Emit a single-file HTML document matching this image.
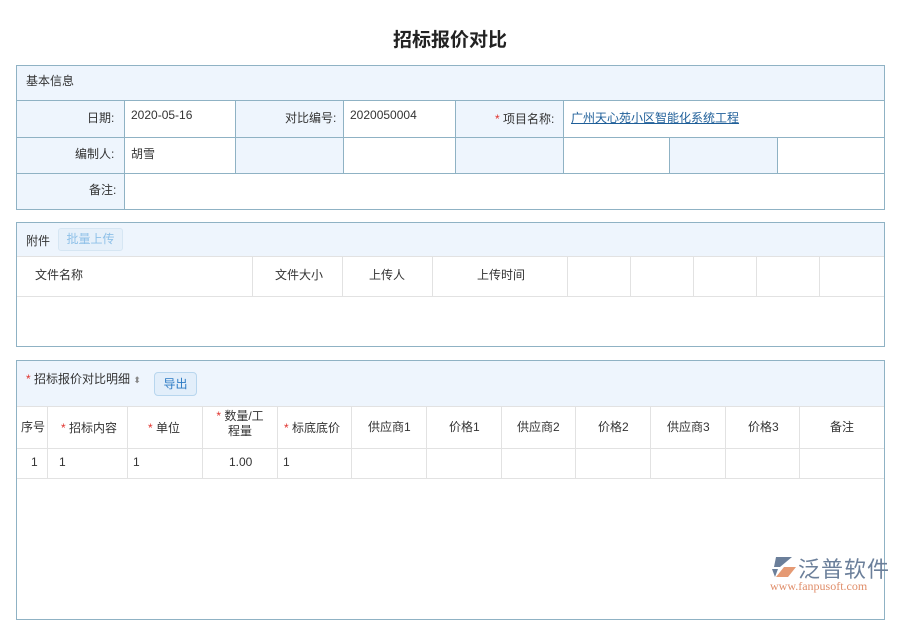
<!DOCTYPE html>
<html><head><meta charset="utf-8"><style>
*{box-sizing:border-box;margin:0;padding:0}
body{width:900px;height:600px;overflow:hidden;background:#fff;font-family:"Liberation Sans","Noto Sans CJK SC",sans-serif;font-size:12px;color:#333;position:relative}
.a{position:absolute}
.t{left:0;width:900px;top:25px;text-align:center;font-size:19px;font-weight:bold;color:#222}
.box{border:1px solid #8fb2c4;left:16px;width:869px}
.hd{background:#eef5fd;left:0;width:867px}
.vl{width:1px;background:#8fb2c4}
.hl{height:1px;background:#8fb2c4}
.gl{background:#e2e2e2}
.lb{background:#eef5fd}
.s{color:#e0332e}
.tx{white-space:nowrap;margin-top:-3px}
</style></head><body>
<div class="a t">招标报价对比</div>

<!-- box1 -->
<div class="a box" style="top:65px;height:145px">
 <div class="a hd" style="top:0;height:34px"></div>
 <div class="a tx" style="left:9px;top:9px">基本信息</div>
 <div class="a lb" style="left:0;top:35px;width:107px;height:108px"></div>
 <div class="a lb" style="left:219px;top:35px;width:107px;height:72px"></div>
 <div class="a lb" style="left:439px;top:35px;width:107px;height:72px"></div>
 <div class="a lb" style="left:653px;top:72px;width:107px;height:35px"></div>
 <div class="a hl" style="left:0;top:34px;width:867px"></div>
 <div class="a hl" style="left:0;top:71px;width:867px"></div>
 <div class="a hl" style="left:0;top:107px;width:867px"></div>
 <div class="a vl" style="left:107px;top:34px;height:109px"></div>
 <div class="a vl" style="left:218px;top:34px;height:73px"></div>
 <div class="a vl" style="left:326px;top:34px;height:73px"></div>
 <div class="a vl" style="left:438px;top:34px;height:73px"></div>
 <div class="a vl" style="left:546px;top:34px;height:73px"></div>
 <div class="a vl" style="left:652px;top:71px;height:36px"></div>
 <div class="a vl" style="left:760px;top:71px;height:36px"></div>
 <div class="a tx" style="left:70px;top:46px">日期:</div>
 <div class="a tx" style="left:114px;top:45px">2020-05-16</div>
 <div class="a tx" style="left:268px;top:46px">对比编号:</div>
 <div class="a tx" style="left:333px;top:45px">2020050004</div>
 <div class="a tx" style="left:478px;top:47px"><span class="s">*</span> 项目名称:</div>
 <div class="a tx" style="left:554px;top:46px;color:#1f5f99;text-decoration:underline">广州天心苑小区智能化系统工程</div>
 <div class="a tx" style="left:58px;top:82px">编制人:</div>
 <div class="a tx" style="left:114px;top:82px">胡雪</div>
 <div class="a tx" style="left:72px;top:118px">备注:</div>
</div>

<!-- box2 -->
<div class="a box" style="top:222px;height:125px">
 <div class="a hd" style="top:0;height:34px;border-bottom:1px solid #e2e2e2"></div>
 <div class="a tx" style="left:9px;top:12px">附件</div>
 <div class="a" style="left:41px;top:5px;width:65px;height:23px;border:1px solid #d6e6f3;border-radius:3px;background:#e6f0fa;color:#8ec0e8;text-align:center;line-height:21px">批量上传</div>
 <div class="a gl" style="left:0;top:73px;width:867px;height:1px"></div>
 <div class="a gl" style="left:235px;top:34px;width:1px;height:39px"></div>
 <div class="a gl" style="left:325px;top:34px;width:1px;height:39px"></div>
 <div class="a gl" style="left:415px;top:34px;width:1px;height:39px"></div>
 <div class="a gl" style="left:550px;top:34px;width:1px;height:39px"></div>
 <div class="a gl" style="left:613px;top:34px;width:1px;height:39px"></div>
 <div class="a gl" style="left:676px;top:34px;width:1px;height:39px"></div>
 <div class="a gl" style="left:739px;top:34px;width:1px;height:39px"></div>
 <div class="a gl" style="left:802px;top:34px;width:1px;height:39px"></div>
 <div class="a tx" style="left:18px;top:46px">文件名称</div>
 <div class="a tx" style="left:258px;top:46px">文件大小</div>
 <div class="a tx" style="left:352px;top:46px">上传人</div>
 <div class="a tx" style="left:460px;top:46px">上传时间</div>
</div>

<!-- box3 -->
<div class="a box" style="top:360px;height:260px">
 <div class="a hd" style="top:0;height:46px;border-bottom:1px solid #e2e2e2"></div>
 <div class="a tx" style="left:9px;top:12px"><span class="s">*</span> 招标报价对比明细 <span style="color:#888;font-size:9px">⬍</span></div>
 <div class="a" style="left:137px;top:11px;width:43px;height:24px;border:1px solid #b8d6ee;border-radius:4px;background:#e2eefa;color:#2d7bc4;text-align:center;line-height:22px">导出</div>
 <div class="a gl" style="left:0;top:87px;width:867px;height:1px"></div>
 <div class="a gl" style="left:0;top:117px;width:867px;height:1px"></div>
 <div class="a gl" style="left:30px;top:46px;width:1px;height:71px"></div>
 <div class="a gl" style="left:110px;top:46px;width:1px;height:71px"></div>
 <div class="a gl" style="left:185px;top:46px;width:1px;height:71px"></div>
 <div class="a gl" style="left:260px;top:46px;width:1px;height:71px"></div>
 <div class="a gl" style="left:334px;top:46px;width:1px;height:71px"></div>
 <div class="a gl" style="left:409px;top:46px;width:1px;height:71px"></div>
 <div class="a gl" style="left:484px;top:46px;width:1px;height:71px"></div>
 <div class="a gl" style="left:558px;top:46px;width:1px;height:71px"></div>
 <div class="a gl" style="left:633px;top:46px;width:1px;height:71px"></div>
 <div class="a gl" style="left:708px;top:46px;width:1px;height:71px"></div>
 <div class="a gl" style="left:782px;top:46px;width:1px;height:71px"></div>
 <div class="a tx" style="left:4px;top:60px">序号</div>
 <div class="a tx" style="left:44px;top:61px"><span class="s">*</span> 招标内容</div>
 <div class="a tx" style="left:131px;top:61px"><span class="s">*</span> 单位</div>
 <div class="a tx" style="left:198px;top:51px;width:50px;text-align:center;line-height:15px"><span class="s">*</span> 数量/工<br>程量</div>
 <div class="a tx" style="left:267px;top:61px"><span class="s">*</span> 标底底价</div>
 <div class="a tx" style="left:351px;top:60px">供应商1</div>
 <div class="a tx" style="left:432px;top:60px">价格1</div>
 <div class="a tx" style="left:500px;top:60px">供应商2</div>
 <div class="a tx" style="left:581px;top:60px">价格2</div>
 <div class="a tx" style="left:650px;top:60px">供应商3</div>
 <div class="a tx" style="left:731px;top:60px">价格3</div>
 <div class="a tx" style="left:813px;top:60px">备注</div>
 <div class="a tx" style="left:14px;top:97px">1</div>
 <div class="a tx" style="left:42px;top:97px">1</div>
 <div class="a tx" style="left:116px;top:97px">1</div>
 <div class="a tx" style="left:212px;top:97px">1.00</div>
 <div class="a tx" style="left:266px;top:97px">1</div>
</div>

<!-- logo -->
<svg class="a" style="left:770px;top:555px" width="28" height="24" viewBox="0 0 28 24">
 <path d="M6 2 L22 2 L10 12 L4 12 Z" fill="#6b7f9a"/>
 <path d="M14 12 L26 12 L18 22 L6 22 Z" fill="#e59a74"/>
 <path d="M2 14 L8 14 L5 22 Z" fill="#6b7f9a"/>
</svg>
<div class="a" style="left:798px;top:552px;font-size:22px;color:#6b7f9a;letter-spacing:1px;white-space:nowrap">泛普软件</div>
<div class="a" style="left:770px;top:579px;font-size:12px;color:#e08e6a;font-family:'Liberation Serif',serif;white-space:nowrap">www.fanpusoft.com</div>
</body></html>
